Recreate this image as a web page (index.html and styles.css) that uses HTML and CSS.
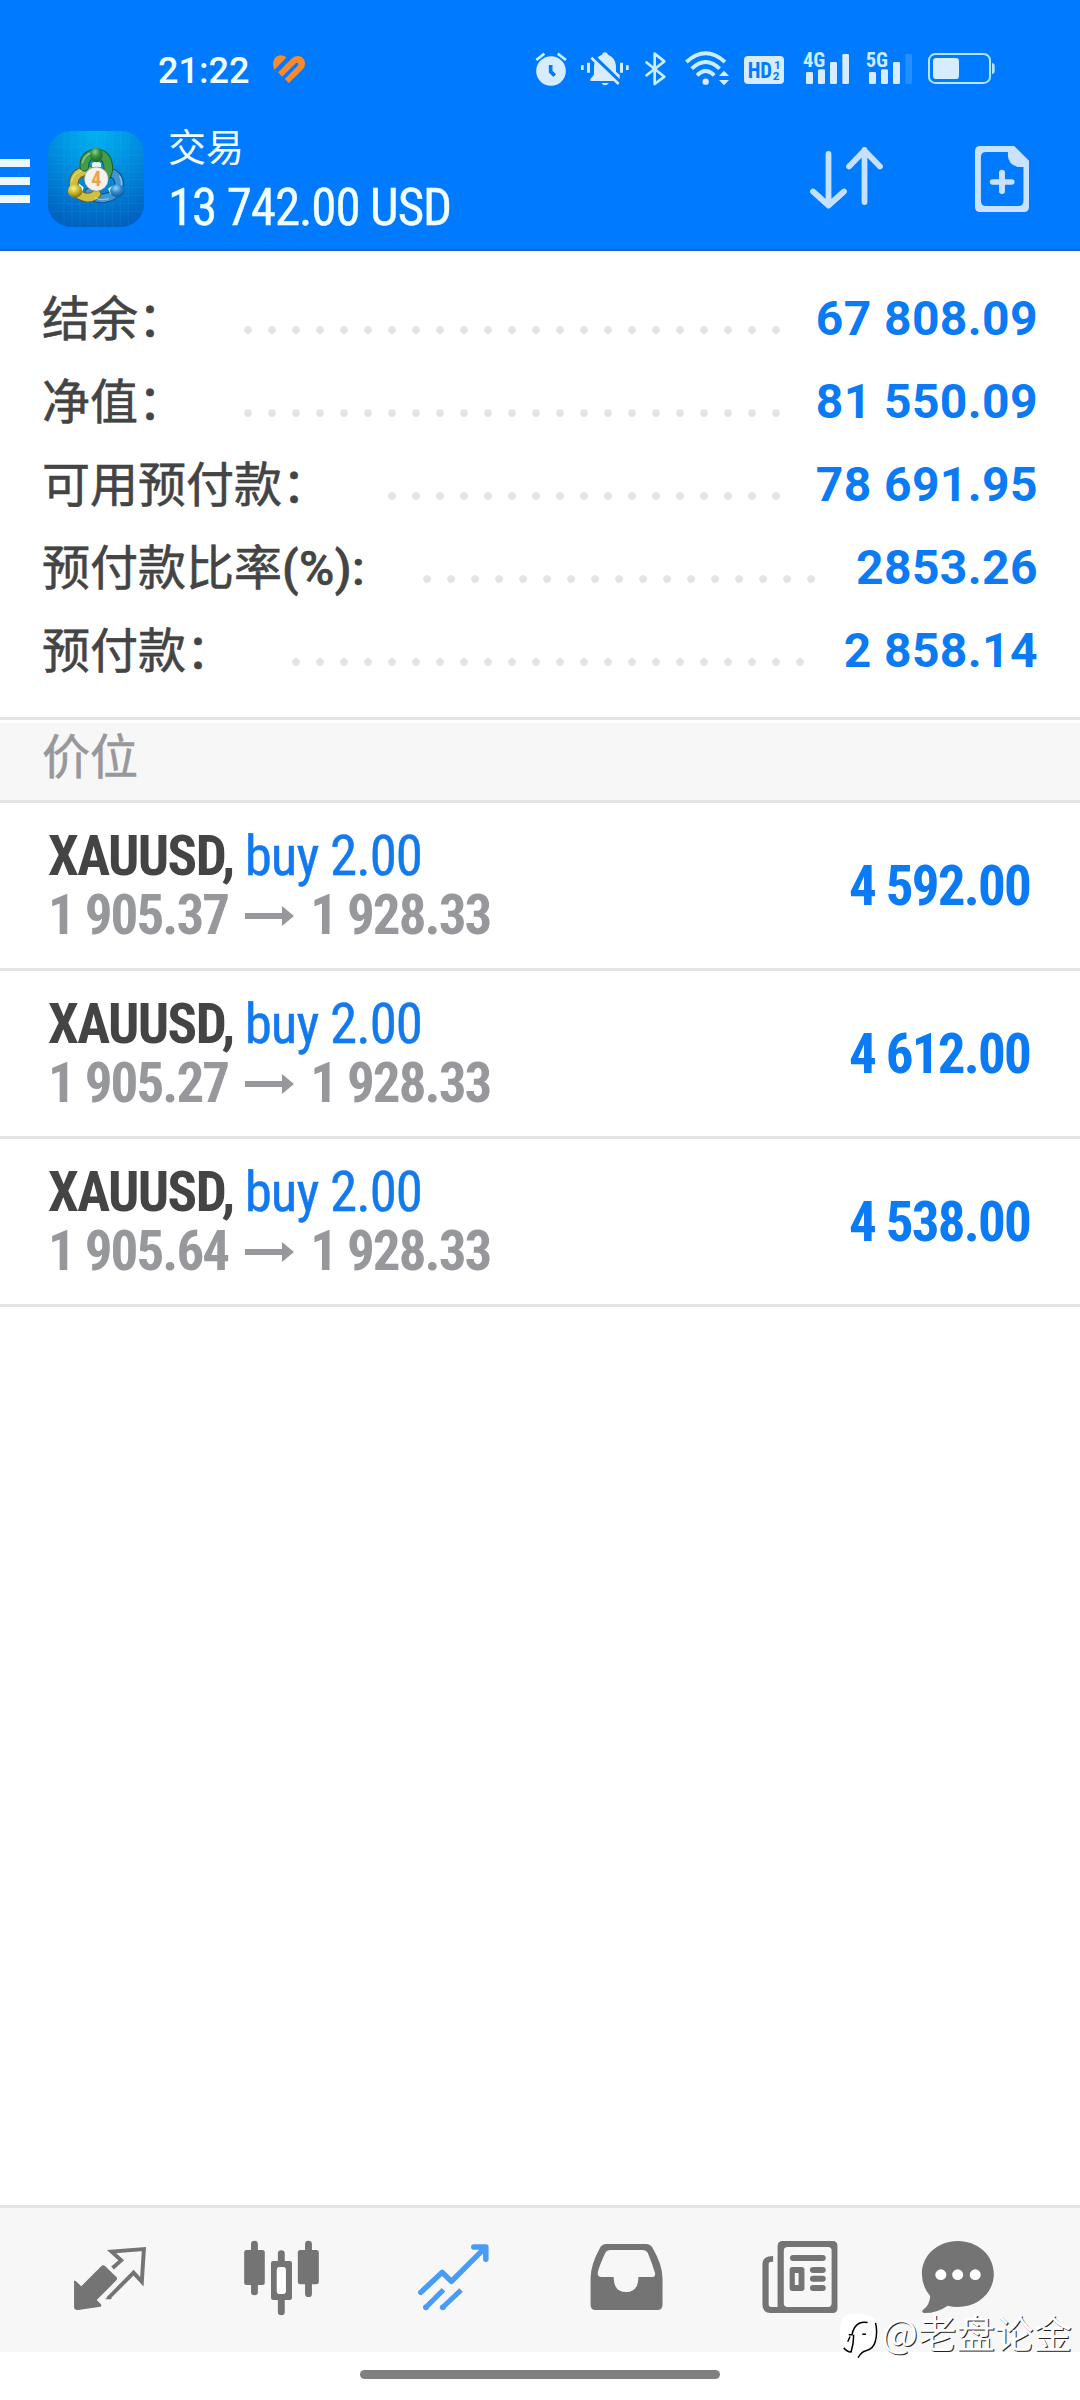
FILE: index.html
```html
<!DOCTYPE html>
<html lang="zh-CN">
<head>
<meta charset="utf-8">
<title>交易</title>
<link rel="stylesheet" href="styles.css">
</head>
<body>
<div class="screen">
  <header class="header">
    <div class="status">
      <span class="clock">21:22</span>
      <svg class="heart" viewBox="818 74 98 84" preserveAspectRatio="none">
        <path d="M826 126C810 100 822 74 842 75Q853 76 860 82L826 117Z" fill="#f98a2b"/>
        <path d="M834 126L874 86C890 70 916 76 916 101Q916 110 909 117L867 158L854 146L894 106Q898 100 894 98Q890 96 886 100L846 139Z" fill="#f98a2b"/>
        <path d="M816 129L863 81" stroke="#007aff" stroke-width="5"/>
      </svg>
      <svg class="status-icons" viewBox="0 0 1470 180" fill="#d8ecff">
        <path d="M49 60L73 41M113 41L138 60" stroke="#c9f0ff" stroke-width="8"/>
        <circle cx="93" cy="93" r="44.500"/>
        <path d="M92 75V95L104 107" fill="none" stroke="#007aff" stroke-width="11"/>
        <path d="M211 123V117L222 104V78Q224 52 246 44Q248 37 255 37Q262 37 264 44Q286 52 288 78V95L299 104V123Z"/>
        <path d="M245 129H266Q262 136 255 136Q248 136 245 129Z"/>
        <path d="M213 42L302 128" stroke="#007aff" stroke-width="12"/>
        <path d="M214 53L296 132" stroke="#d8ecff" stroke-width="8"/>
        <path d="M183 76h8v14h-8zM201 68h9v30h-9zM300 68h9v30h-9zM318 76h8v14h-8z"/>
        <path d="M377 65L433 110L404 132V41L433 64L377 108" fill="none" stroke="#c9eeff" stroke-width="8" stroke-linejoin="round"/>
        <path d="M499 66Q557 14 615 66M515 86Q557 46 599 86M531 106Q557 80 583 106" fill="none" stroke="#c9eeff" stroke-width="11.500"/>
        <circle cx="557" cy="125" r="9.500"/>
        <path d="M597 108L612 92L627 108ZM597 120H627L612 136Z"/>
        <rect x="672" y="48" width="120" height="84" rx="12"/>
        <text class="hd" x="683" y="114" textLength="73" lengthAdjust="spacingAndGlyphs">HD</text>
        <text class="hd-num" x="762" y="86">1</text>
        <text class="hd-num" x="758" y="120">2</text>
        <text class="net" x="849" y="82" textLength="67" lengthAdjust="spacingAndGlyphs">4G</text>
        <rect x="858" y="96" width="21" height="36" rx="4"/>
        <rect x="894" y="88" width="21" height="44" rx="4"/>
        <rect x="930" y="66" width="21" height="66" rx="4"/>
        <rect x="967" y="42" width="20" height="90" rx="4"/>
        <text class="net" x="1037" y="82" textLength="67" lengthAdjust="spacingAndGlyphs">5G</text>
        <rect x="1047" y="96" width="21" height="36" rx="4"/>
        <rect x="1083" y="88" width="21" height="44" rx="4"/>
        <rect x="1119" y="66" width="21" height="66" rx="4"/>
        <rect x="1156" y="42" width="20" height="90" rx="4" fill="#2490ff"/>
        <rect x="1227" y="42" width="183" height="87" rx="19" fill="none" stroke="#b5e4ff" stroke-width="6"/>
        <rect x="1239" y="54" width="78" height="63" rx="10"/>
        <path d="M1416 69Q1424 70 1424 78V93Q1424 101 1416 102Z" fill="#b5e4ff"/>
      </svg>
    </div>
    <div class="toolbar">
      <div class="burger"><i></i><i></i><i></i></div>
      <svg class="app-icon" viewBox="24 33 288 288">
        <defs>
          <radialGradient id="sky" cx=".5" cy="0" r="1"><stop offset="0" stop-color="#00b4f0"/><stop offset=".45" stop-color="#008fe0"/><stop offset="1" stop-color="#0062c0"/></radialGradient>
          <radialGradient id="green" cx=".4" cy=".3" r=".7"><stop offset="0" stop-color="#8fd480"/><stop offset=".5" stop-color="#338c3e"/><stop offset="1" stop-color="#1b6b2b"/></radialGradient>
          <radialGradient id="gold" cx=".4" cy=".3" r=".7"><stop offset="0" stop-color="#fff48c"/><stop offset=".5" stop-color="#c9b934"/><stop offset="1" stop-color="#80721a"/></radialGradient>
          <radialGradient id="blue" cx=".4" cy=".3" r=".7"><stop offset="0" stop-color="#94d6fb"/><stop offset=".5" stop-color="#3189cf"/><stop offset="1" stop-color="#105c9e"/></radialGradient>
        </defs>
        <rect x="24" y="33" width="288" height="288" rx="68" fill="url(#sky)"/>
        <path d="M72 36V318M96 34V320M120 33V321M144 33V321M169 33V321M193 33V321M217 33V321M241 34V320M265 36V318M27 82H309M25 106H311M24 131H312M24 155H312M24 179H312M24 203H312M24 227H312M25 251H311M30 275H306" stroke="#7fd0ff" stroke-opacity=".16" stroke-width="1.500"/>
        <g fill="none" stroke-linecap="round">
          <path d="M148 218Q168 240 196 234Q234 226 238 190Q236 172 222 162" stroke="#0e4f86" stroke-width="29"/>
          <path d="M148 218Q168 240 196 234Q234 226 238 190Q236 172 222 162" stroke="#3f97d6" stroke-width="23"/>
          <path d="M148 153Q104 152 101 190Q103 227 142 233Q160 233 169 222" stroke="#6b5e17" stroke-width="29"/>
          <path d="M148 153Q104 152 101 190Q103 227 142 233Q160 233 169 222" stroke="#cdbf40" stroke-width="23"/>
          <path d="M133 140Q131 106 169 100Q205 104 205 147Q204 158 200 166" stroke="#195f29" stroke-width="29"/>
          <path d="M133 140Q131 106 169 100Q205 104 205 147Q204 158 200 166" stroke="#449c4b" stroke-width="23"/>
          <path d="M127 128Q135 104 153 99M95 183Q101 160 125 152M239 168Q247 184 243 202M165 233Q182 243 205 236" stroke="#d8f8dc" stroke-opacity=".5" stroke-width="4"/>
        </g>
        <path d="M156 130L169 122L183 130V142H156ZM116 190L131 202L128 214L118 222ZM216 198L204 206L211 221H220Z" fill="#e8f6ee"/>
        <ellipse cx="169" cy="105" rx="19" ry="22" fill="url(#green)"/>
        <ellipse cx="105" cy="213" rx="22" ry="20" fill="url(#gold)"/>
        <ellipse cx="232" cy="212" rx="22" ry="19" fill="url(#blue)"/>
        <circle cx="169" cy="177" r="36" fill="#f4f2ef" stroke="#6f7a70" stroke-width="1.500"/>
        <text class="badge" x="169" y="199">4</text>
      </svg>
      <div class="titles">
        <div class="title">交易</div>
        <div class="profit">13 742.00 USD</div>
      </div>
      <svg class="sort" viewBox="0 0 76 66">
        <path d="M19.500 9V60M4 46.500L19.500 60.500L35 46.500M55.500 57V5M40 21.500L55.500 5.500L71 21.500" fill="none" stroke="#c6e1ff" stroke-width="5.800" stroke-linecap="round" stroke-linejoin="round"/>
      </svg>
      <svg class="new-order" viewBox="1284 348 146 198" preserveAspectRatio="none">
        <path fill-rule="evenodd" fill="#c9e2ff" d="M1298 348H1390L1430 392V530Q1430 546 1416 546H1298Q1284 546 1284 530V364Q1284 348 1298 348ZM1314 366Q1300 366 1300 382V512Q1300 528 1314 528H1401Q1415 528 1415 512V411H1399Q1373 402 1373 376V366Z"/>
        <path d="M1357 427V484M1332 456H1383" stroke="#c9e2ff" stroke-width="16" stroke-linecap="round"/>
      </svg>
    </div>
  </header>

  <section class="summary">
    <div class="line"><span class="label">结余：</span><i class="dots"></i><b class="amount">67 808.09</b></div>
    <div class="line"><span class="label">净值：</span><i class="dots"></i><b class="amount">81 550.09</b></div>
    <div class="line"><span class="label">可用预付款：</span><i class="dots"></i><b class="amount">78 691.95</b></div>
    <div class="line"><span class="label">预付款比率<span class="unit">(%):</span></span><i class="dots"></i><b class="amount">2853.26</b></div>
    <div class="line"><span class="label">预付款：</span><i class="dots"></i><b class="amount">2 858.14</b></div>
  </section>

  <h2 class="section-title">价位</h2>

  <main class="positions">
    <div class="position">
      <div class="deal">
        <div><b class="symbol">XAUUSD,</b> <span class="side">buy 2.00</span></div>
        <div class="prices">1 905.37<svg class="arrow" viewBox="0 0 49 20"><path d="M0 7H37V0L49 10L37 20V13H0Z"/></svg>1 928.33</div>
      </div>
      <b class="gain">4 592.00</b>
    </div>
    <div class="position">
      <div class="deal">
        <div><b class="symbol">XAUUSD,</b> <span class="side">buy 2.00</span></div>
        <div class="prices">1 905.27<svg class="arrow" viewBox="0 0 49 20"><path d="M0 7H37V0L49 10L37 20V13H0Z"/></svg>1 928.33</div>
      </div>
      <b class="gain">4 612.00</b>
    </div>
    <div class="position">
      <div class="deal">
        <div><b class="symbol">XAUUSD,</b> <span class="side">buy 2.00</span></div>
        <div class="prices">1 905.64<svg class="arrow" viewBox="0 0 49 20"><path d="M0 7H37V0L49 10L37 20V13H0Z"/></svg>1 928.33</div>
      </div>
      <b class="gain">4 538.00</b>
    </div>
  </main>

  <nav class="tabs">
    <svg class="tab" viewBox="180 126 279 288" preserveAspectRatio="none">
      <path d="M215 273Q219 271 223 276L236 289L294 229Q299 223 305 228L338 261Q342 266 338 271L281 330L293 343Q297 348 291 350L227 360Q215 361 215 351Z"/>
      <path d="M327 234L352 211L324 185L418 177L412 275L388 248L315 324" fill="none" stroke="#747474" stroke-width="11.500"/>
      <path d="M306 327L315 317L325 326Q318 329 306 327Z"/>
    </svg>
    <svg class="tab" viewBox="679.5 126 279 288" preserveAspectRatio="none">
      <path d="M739 162V306M896 162V311M817 191V220M817 320V366" stroke="#747474" stroke-width="20" stroke-linecap="round"/>
      <rect x="709" y="180" width="60" height="105" rx="7"/><rect x="865" y="180" width="61" height="103" rx="7"/>
      <path fill-rule="evenodd" d="M793 213H842Q848 213 848 220V323Q848 330 842 330H793Q787 330 787 323V220Q787 213 793 213ZM813 231Q804 231 804 240V303Q804 312 813 312H821Q830 312 830 303V240Q830 231 821 231Z"/>
      <rect x="804" y="231" width="26" height="81" rx="9" fill="#fff"/>
    </svg>
    <svg class="tab" viewBox="1179 126 279 288" preserveAspectRatio="none">
      <g fill="none" stroke="#479cf8" stroke-width="16" stroke-linecap="round" stroke-linejoin="round">
        <path d="M1222 307L1284 247L1311 274L1405 177M1376 171H1411V208"/>
      </g>
      <path d="M1237 352L1288 299M1286 352L1339 300" stroke="#479cf8" stroke-width="15"/>
      <circle cx="1237" cy="352" r="8.500" fill="#479cf8"/><circle cx="1286" cy="352" r="8.500" fill="#479cf8"/>
    </svg>
    <svg class="tab" viewBox="110.4 126 279 288" preserveAspectRatio="none">
      <path fill-rule="evenodd" d="M192 162H308Q320 162 327 173Q356 225 356 264V344Q356 360 341 360H162Q147 360 147 344V264Q147 225 173 176Q180 162 192 162ZM205 180Q194 180 190 188Q175 220 168 246Q166 261 178 261H214Q214 306 250 306Q286 306 286 261H324Q337 261 334 248Q326 220 313 188Q308 180 299 180Z"/>
    </svg>
    <svg class="tab" viewBox="609.8 126 279 288" preserveAspectRatio="none">
      <path fill-rule="evenodd" d="M677 198V215Q664 214 664 222V343Q664 351 672 351H690V168Q690 153 705 153H850Q864 153 864 168V354Q864 369 850 369H670Q646 369 646 343V222Q646 198 677 198ZM719 171Q708 171 708 182V340Q708 351 719 351H837Q847 351 847 340V182Q847 171 837 171Z"/>
      <path d="M735 204H821M793 240H821M793 266H821M793 294H821" stroke="#747474" stroke-width="18" stroke-linecap="round"/>
      <path fill-rule="evenodd" d="M733 231H760Q768 231 768 239V295Q768 303 760 303H733Q725 303 725 295V239Q725 231 733 231ZM740 249V285H751V249Z"/>
    </svg>
    <svg class="tab" viewBox="1109.3 126 279 288" preserveAspectRatio="none">
      <path d="M1213 153C1272 153 1318 196 1318 252C1318 308 1272 351 1213 351Q1198 351 1184 347Q1154 369 1116 369Q1106 367 1112 360Q1132 346 1133 318Q1109 289 1109 252C1109 196 1155 153 1213 153Z"/>
      <g fill="#fff"><circle cx="1164" cy="254" r="16"/><circle cx="1213" cy="254" r="16"/><circle cx="1264" cy="254" r="16"/></g>
    </svg>
  </nav>
  <footer class="gesture"><i class="pill"></i></footer>

  <div class="watermark">
    <svg class="mark" viewBox="26 28 114 136">
      <path d="M50 31Q82 24 114 32Q130 36 134 54Q140 82 133 112Q129 133 106 142Q93 146 80 160Q81 146 72 144Q50 143 37 132Q27 118 26 92Q25 62 32 44Q36 34 50 31Z" fill="#fff"/>
      <path d="M52 91H62Q66 65 84 56Q94 51 109 54M93 89H104M67 91Q67 118 59 143Q46 142 37 130M49 112L56 96M133 55Q140 84 132 112Q127 133 104 139Q91 142 80 160" fill="none" stroke="#000" stroke-width="4.500"/>
    </svg>
    <span>@老盘论金</span>
  </div>
</div>
</body>
</html>
```
FILE: styles.css
```css
* { box-sizing: border-box; }

body {
  margin: 0;
  background: #fff;
  font-family: Roboto, "Noto Sans CJK SC", sans-serif;
}

.screen {
  position: relative;
  display: flex;
  flex-direction: column;
  width: 1080px;
  height: 2400px;
  overflow: hidden;
}

.header {
  height: 251px;
  background: #007aff;
  border-bottom: 2px solid #1667c0;
  color: #f2fdff;
}

.status {
  display: flex;
  align-items: center;
  height: 100px;
  padding: 40px 70px 0 158px;
}

.clock {
  width: 115px;
  padding-top: 1px;
  font-size: 36px;
  font-weight: 500;
  line-height: 60px;
}

.heart { width: 32px; height: 28px; margin-bottom: 3px; }

.status-icons { width: 490px; height: 60px; margin-left: auto; }

.hd { font: 700 64px "Roboto Condensed", sans-serif; fill: #007aff; }
.hd-num { font: 700 35px Roboto, sans-serif; fill: #007aff; }
.net { font: 700 63px "Roboto Condensed", sans-serif; fill: #c9eeff; }

.toolbar {
  display: flex;
  align-items: flex-start;
  height: 149px;
  padding-right: 51px;
}

.burger {
  display: flex;
  flex-direction: column;
  gap: 10px;
  width: 30px;
  margin: 59px 18px 0 0;
}

.burger i { height: 8px; background: #ebf9ff; }

.app-icon { width: 96px; height: 96px; margin-top: 31px; }

.badge {
  font: 700 60px "Roboto Condensed", sans-serif;
  fill: #f0a04b;
  text-anchor: middle;
}

.titles { margin: 25px auto 0 24px; }

.title {
  font-size: 38px;
  line-height: 46px;
}

.profit {
  font-family: "Roboto Condensed", sans-serif;
  font-size: 51px;
  line-height: 60px;
  letter-spacing: -1.1px;
  margin-top: 7px;
  -webkit-text-stroke: .4px #f2fdff;
}

.sort { width: 76px; height: 66px; margin: 45px 90px 0 0; }

.new-order { width: 54px; height: 66px; margin-top: 46px; }

.summary {
  height: 469px;
  padding: 26px 42px 0;
  border-bottom: 3px solid #e4e4e4;
}

.line {
  display: flex;
  align-items: center;
  height: 83px;
  font-size: 48px;
  line-height: 83px;
}

.label {
  padding-top: 2px;
  color: #444;
  -webkit-text-stroke: .6px #444;
}

.unit { font-weight: 500; letter-spacing: .4px; }

.dots {
  flex: 1;
  height: 8px;
  margin: 23px 30px 0 50px;
  background: radial-gradient(circle at 12px 4px, #e4e4e4 3.500px, transparent 4.200px) 0 0 / 24px 8px repeat-x;
}

.amount { color: #0a7af5; letter-spacing: .4px; }

.section-title {
  height: 80px;
  margin: 3px 0 0;
  padding-left: 42px;
  background: #f7f7f7;
  border-bottom: 3px solid #e4e4e4;
  color: #97989b;
  font-size: 48px;
  font-weight: 400;
  line-height: 70px;
  -webkit-text-stroke: .6px #97989b;
}

.positions {
  flex: 1;
  font-family: "Roboto Condensed", sans-serif;
  font-size: 55px;
  letter-spacing: -1.6px;
}

.position {
  display: flex;
  align-items: center;
  justify-content: space-between;
  height: 168px;
  padding: 1px 50px 0 48px;
  border-bottom: 3px solid #e4e4e4;
}

.deal { line-height: 59px; }

.symbol { color: #444; }

.side {
  color: #1279ef;
  letter-spacing: -1px;
  -webkit-text-stroke: .4px #1279ef;
}

.prices {
  display: flex;
  align-items: center;
  color: #97989b;
  font-weight: 700;
  letter-spacing: -1.9px;
}

.arrow { width: 49px; height: 20px; margin: 1px 16px 0 17px; fill: #97989b; }

.gain { color: #0a7af5; letter-spacing: -1.8px; }

.tabs {
  display: grid;
  grid-template-columns: repeat(6, 1fr);
  place-items: center;
  height: 147px;
  padding: 0 24px;
  background: #f7f7f7;
  border-top: 3px solid #e4e4e4;
}

.tab { width: 96px; height: 96px; fill: #747474; overflow: visible; }

.gesture {
  height: 48px;
  padding-top: 18px;
}

.pill {
  display: block;
  width: 360px;
  height: 9px;
  margin: 0 auto;
  border-radius: 5px;
  background: #808080;
}

.watermark {
  position: absolute;
  right: 8px;
  bottom: 36px;
  display: flex;
  align-items: center;
  gap: 4px;
  color: #fff;
  font-family: "Noto Sans CJK SC", sans-serif;
  font-size: 38.5px;
  line-height: 46px;
  text-shadow: 1px 1px 0 #222;
}

.watermark span { padding-bottom: 10px; }

.mark { width: 38px; height: 45px; }
```
